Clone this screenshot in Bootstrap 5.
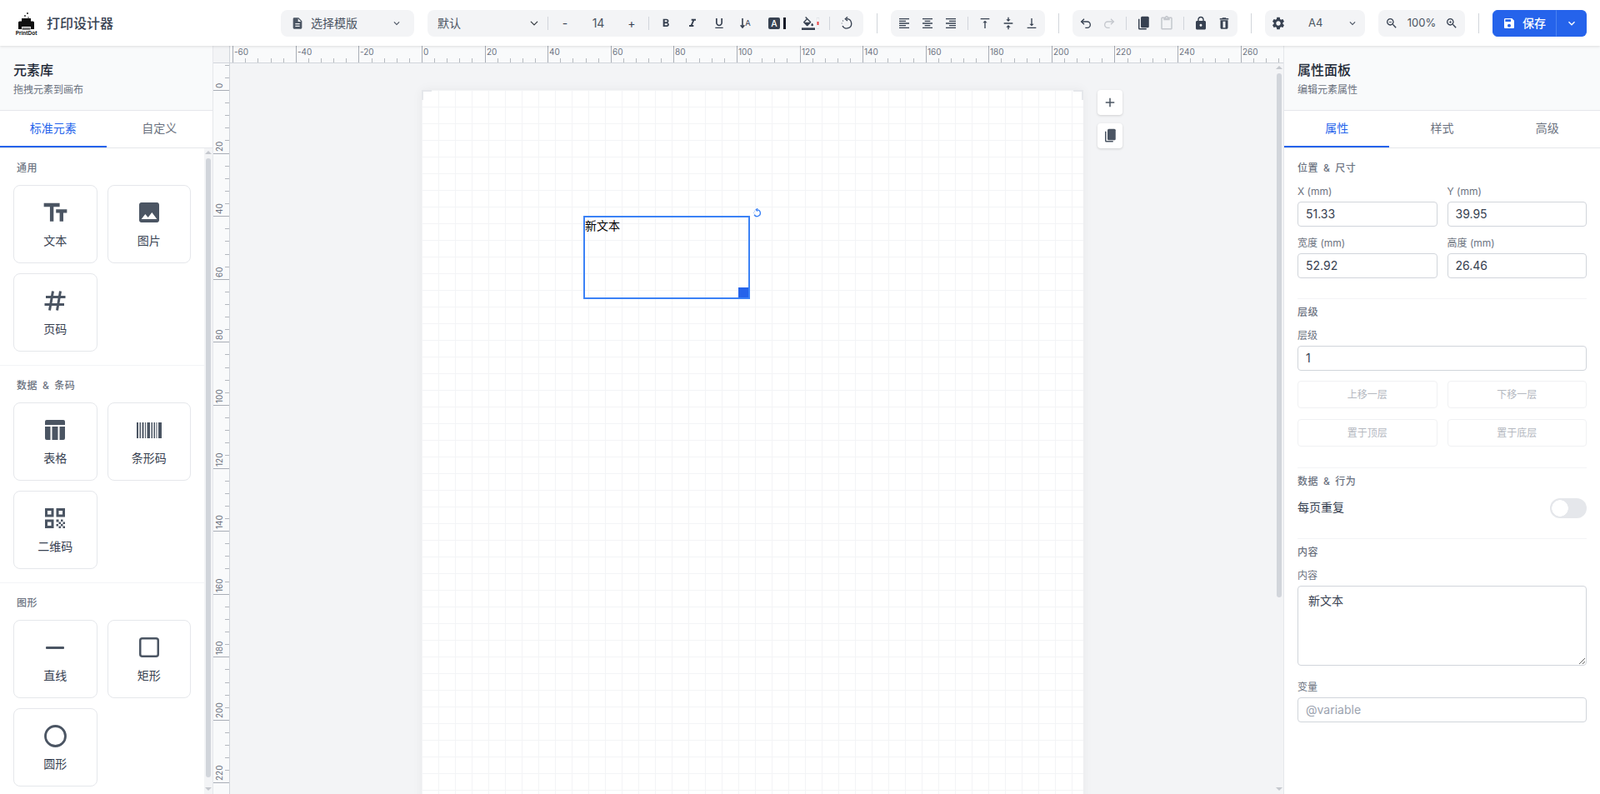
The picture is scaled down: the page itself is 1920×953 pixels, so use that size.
<!DOCTYPE html>
<html lang="zh-CN">
  <head>
    <meta charset="UTF-8" />
    <meta name="viewport" content="width=device-width, initial-scale=1.0" />
    <title>打印设计器</title>
    <link rel="stylesheet" href="https://cdn.jsdelivr.net/npm/bootstrap@5.3.0/dist/css/bootstrap.min.css" />
    <style>
      body {
        font-family: Inter, "Noto Sans CJK SC", sans-serif;
        font-size: 14px;
        color: #374151;
        height: 953px;
        overflow: hidden;
      }
      svg { display: block; flex-shrink: 0; }

      /* header */
      .app-header {
        height: 55px;
        flex-shrink: 0;
        padding: 0 16px;
        background: #fff;
        box-shadow: 0 1px 3px rgba(0, 0, 0, 0.12);
        position: relative;
        z-index: 5;
      }
      .brand-name { font-size: 16px; font-weight: 500; color: #374151; margin-left: 9px; }
      .tool-group {
        height: 32px;
        padding: 0 2px;
        background: #f3f4f6;
        border-radius: 8px;
      }
      .tool-btn {
        width: 28px;
        height: 28px;
        padding: 0;
        border: 0;
        border-radius: 4px;
        color: #374151;
        font-size: 14px;
        display: flex;
        align-items: center;
        justify-content: center;
      }
      .tool-btn.is-off { color: #c4c7cd; }
      .tool-sep { width: 1px; height: 16px; margin: 0 6px; background: #d1d5db; }
      .head-sep { width: 1px; height: 24px; background: #d1d5db; }
      .template-pick { width: 160px; padding: 0 14px 0 12px; color: #4b5563; }
      .template-pick span { margin-left: 8px; font-size: 14px; margin-right: auto; }
      .font-pick {
        width: 138px;
        height: 32px;
        padding: 0 20px 0 12px;
        border: 0;
        background-color: transparent;
        background-position: right 4px center;
        background-size: 12px 10px;
        font-size: 14px;
        color: #4b5563;
      }
      .size-value { width: 52px; text-align: center; color: #4b5563; }
      .wide-btn { width: 38px; }
      .fill-btn { width: 34px; }
      .page-pick { width: 88px; padding: 0 6px 0 22px; font-size: 13px; color: #4b5563; }
      .zoom-value { width: 44px; text-align: center; font-size: 13px; color: #4b5563; }
      .save-btn { background: #2563eb; border-color: #2563eb; height: 32px; font-size: 14px; font-weight: 500; display: flex; align-items: center; }
      .save-main { width: 77px; padding: 0 0 0 11px; gap: 8px; }
      .save-drop { width: 37px; padding: 0; justify-content: center; border-left-color: #4b82f0; }

      /* side panels */
      .side-left { width: 256px; flex-shrink: 0; border-right: 1px solid #e5e7eb; }
      .side-right { width: 380px; flex-shrink: 0; border-left: 1px solid #e5e7eb; }
      .panel-head {
        height: 78px;
        flex-shrink: 0;
        padding: 17px 16px 0;
        background: #f9fafb;
        border-bottom: 1px solid #e5e7eb;
      }
      .panel-title { font-size: 16px; line-height: 24px; font-weight: 500; color: #1f2937; margin-bottom: 3px; }
      .panel-sub { font-size: 12px; line-height: 18px; color: #6b7280; }
      .panel-tabs { height: 45px; flex-shrink: 0; border-bottom: 1px solid #e5e7eb; }
      .panel-tabs .nav-link {
        height: 44px;
        padding: 0;
        line-height: 42px;
        color: #6b7280;
        font-size: 14px;
        border-radius: 0;
        border-bottom: 2px solid transparent;
      }
      .panel-tabs .nav-link.active { color: #2563eb; border-bottom-color: #2563eb; }

      .fake-scroll { width: 10px; flex-shrink: 0; background: #f3f4f6; align-items: center; }
      .fake-scroll .arrow-up,
      .fake-scroll .arrow-down { width: 0; height: 0; border-left: 4px solid transparent; border-right: 4px solid transparent; }
      .fake-scroll .arrow-up { border-bottom: 4px solid #c5c8ce; }
      .fake-scroll .arrow-down { border-top: 4px solid #c5c8ce; margin-top: auto; margin-bottom: 4px; }
      .fake-scroll .bar { width: 6px; background: #d1d5db; border-radius: 3px; }
      .left-scroll .arrow-up { margin-top: 3px; }
      .left-scroll .bar { height: 743px; margin-top: 5px; }
      .canvas-scroll .arrow-up { margin-top: 3px; }
      .canvas-scroll .bar { height: 629px; margin-top: 5px; }

      .lib-section { padding: 16px; border-bottom: 1px solid #f3f4f6; }
      .lib-section .group-title { padding-left: 4px; }
      .group-title { font-size: 12px; line-height: 16px; font-weight: 500; letter-spacing: 0.6px; word-spacing: 2px; color: #6b7280; margin-bottom: 12px; }
      .tile-grid { display: grid; grid-template-columns: 1fr 1fr; gap: 12px; }
      .tile {
        height: 94px;
        border: 1px solid #e5e7eb;
        border-radius: 8px;
        align-items: center;
        padding-top: 16px;
        color: #374151;
        font-size: 14px;
        line-height: 20px;
      }
      .tile-icon { width: 32px; height: 32px; margin-bottom: 8px; color: #4b5563; display: flex; align-items: center; justify-content: center; }

      /* rulers + canvas */
      .ruler-top { height: 21px; flex-shrink: 0; }
      .ruler-corner { width: 20px; background: #f3f4f6; border-right: 1px solid #d1d5db; border-bottom: 1px solid #d1d5db; flex-shrink: 0; }
      .ruler-strip { flex-grow: 1; background: #f9fafb; border-bottom: 1px solid #d1d5db; overflow: hidden; }
      .ruler-side { width: 20px; flex-shrink: 0; background: #f9fafb; border-right: 1px solid #d1d5db; overflow: hidden; }
      .ruler-strip text, .ruler-side text { font-size: 10px; fill: #6b7280; font-family: Inter, sans-serif; }
      .canvas-area { background: #f3f4f6; padding: 32px 0 0 230px; overflow: hidden; min-width: 0; }
      .sheet {
        width: 794px;
        height: 1123px;
        flex-shrink: 0;
        position: relative;
        background-color: #fff;
        background-image: linear-gradient(#f3f4f6 1px, transparent 1px), linear-gradient(90deg, #f3f4f6 1px, transparent 1px);
        background-size: 20px 20px;
        box-shadow: 0 0 12px rgba(0, 0, 0, 0.05);
      }
      .corner-mark { position: absolute; top: 0; width: 12px; height: 12px; border-top: 2px solid #e5e7eb; }
      .corner-mark.at-left { left: 0; border-left: 2px solid #e5e7eb; }
      .corner-mark.at-right { right: 0; border-right: 2px solid #e5e7eb; }
      .text-box {
        position: absolute;
        left: 194px;
        top: 151px;
        width: 200px;
        height: 100px;
        border: 2px solid #3b82f6;
        font-size: 14px;
        line-height: 20px;
        color: #000;
      }
      .resize-dot { position: absolute; right: 0; bottom: 0; width: 12px; height: 12px; background: #2563eb; }
      .spin-dot { position: absolute; left: 201px; top: -11px; color: #3b82f6; }
      .float-tools { margin-left: 17px; gap: 10px; }
      .float-btn {
        width: 30px;
        height: 30px;
        padding: 0;
        border: 0;
        border-radius: 4px;
        background: #fff;
        color: #4b5563;
        box-shadow: 0 1px 3px rgba(0, 0, 0, 0.15);
        display: flex;
        align-items: center;
        justify-content: center;
      }

      /* properties */
      .prop-body { padding: 16px 16px 0; }
      .prop-section { padding-bottom: 24px; margin-bottom: 8px; border-bottom: 1px solid #f3f4f6; }
      .prop-section.is-layers { padding-bottom: 25px; }
      .prop-section:last-child { border-bottom: 0; }
      .prop-grid { display: grid; grid-template-columns: 1fr 1fr; gap: 12px; }
      .prop-label { display: block; font-size: 12px; line-height: 16px; color: #6b7280; margin-bottom: 4px; }
      .prop-input { height: 30px; padding: 0 9px 1px; border-color: #d1d5db; border-radius: 4px; font-size: 14px; color: #374151; }
      .prop-input::placeholder { color: #9ca3af; }
      .prop-area { display: block; height: 96px; padding: 6px 12px; line-height: 21px; border-color: #d1d5db; border-radius: 4px; font-size: 14px; color: #374151; }
      .layer-btn {
        height: 33px;
        padding: 0;
        border: 1px solid #f0f1f3;
        border-radius: 4px;
        color: #b4b8bf;
        font-size: 12px;
      }
      .layer-btn:disabled { opacity: 1; color: #b4b8bf; border-color: #f0f1f3; }
      .repeat-row { height: 24px; color: #374151; }
      .repeat-row span { line-height: 22px; height: 24px; }
      .repeat-switch.form-switch { padding: 0; margin: 0; min-height: 0; height: 24px; }
      .repeat-switch.form-switch .form-check-input {
        width: 44px;
        height: 24px;
        margin: 0;
        border: 0;
        border-radius: 12px;
        background-color: #e5e7eb;
        background-image: radial-gradient(circle at 12px 12px, #fff 9.5px, transparent 10px);
        background-position: 0 0;
      }
    </style>
  </head>
  <body class="d-flex flex-column">
    <header class="app-header d-flex align-items-center">
      <svg width="31" height="31" viewBox="0 0 31 31">
        <circle cx="17" cy="4" r="1" fill="#222" />
        <circle cx="14" cy="7" r="0.9" fill="#222" />
        <circle cx="18" cy="9" r="0.8" fill="#222" />
        <rect x="10" y="10" width="11" height="4" fill="#111" />
        <path d="M6 15a1.500 1.500 0 0 1 1.500-1.500h16a1.500 1.500 0 0 1 1.500 1.500v8h-4v-3h-11v3h-4z" fill="#111" />
        <rect x="10.500" y="21" width="10" height="3" fill="#777" />
        <text x="15.500" y="30" text-anchor="middle" font-family="Liberation Sans" font-size="6.500" font-weight="700" fill="#111">PrintDot</text>
      </svg>
      <span class="brand-name me-auto">打印设计器</span>

      <div class="d-flex align-items-center gap-3">
        <div class="tool-group template-pick d-flex align-items-center">
          <svg width="16" height="16" viewBox="0 0 24 24" fill="#4b5563"><path d="M14 2H6c-1.100 0-1.990.900-1.990 2L4 20c0 1.100.890 2 1.990 2H18c1.100 0 2-.900 2-2V8l-6-6zm2 16H8v-2h8v2zm0-4H8v-2h8v2zm-3-5V3.500L18.500 9H13z" /></svg>
          <span>选择模版</span>
          <svg width="14" height="14" viewBox="0 0 24 24" fill="#4b5563"><path d="M7.410 8.590L12 13.170l4.590-4.580L18 10l-6 6-6-6 1.410-1.410z" /></svg>
        </div>

        <div class="tool-group d-flex align-items-center" style="padding: 0 6px 0 0">
          <select class="form-select font-pick shadow-none"><option>默认</option></select>
          <div class="tool-sep"></div>
          <button class="btn tool-btn">-</button>
          <div class="size-value">14</div>
          <button class="btn tool-btn">+</button>
          <div class="tool-sep"></div>
          <div class="d-flex align-items-center gap-1">
            <button class="btn tool-btn"><svg width="16" height="16" viewBox="0 0 24 24" fill="currentColor"><path d="M15.600 10.790c.970-.670 1.650-1.770 1.650-2.790 0-2.260-1.750-4-4-4H7v14h7.040c2.090 0 3.710-1.700 3.710-3.790 0-1.520-.860-2.820-2.150-3.420zM10 6.500h3c.830 0 1.500.670 1.500 1.500s-.670 1.500-1.500 1.500h-3v-3zm3.500 9H10v-3h3.500c.830 0 1.500.670 1.500 1.500s-.670 1.500-1.500 1.500z" /></svg></button>
            <button class="btn tool-btn"><svg width="16" height="16" viewBox="0 0 24 24" fill="currentColor"><path d="M10 4v3h2.210l-3.420 8H6v3h8v-3h-2.210l3.420-8H18V4z" /></svg></button>
            <button class="btn tool-btn"><svg width="16" height="16" viewBox="0 0 24 24" fill="currentColor"><path d="M12 17c3.310 0 6-2.690 6-6V3h-2.500v8c0 1.930-1.570 3.500-3.500 3.500S8.500 12.930 8.500 11V3H6v8c0 3.310 2.690 6 6 6zm-7 2v2h14v-2H5z" /></svg></button>
            <button class="btn tool-btn"><svg width="16" height="16" viewBox="0 0 24 24"><path d="M6 3v16M2.500 15.500 6 19.500l3.500-4" fill="none" stroke="currentColor" stroke-width="2.400" /><text x="11" y="17" font-family="Inter" font-size="14" fill="currentColor">A</text></svg></button>
            <button class="btn tool-btn wide-btn">
              <span class="d-flex align-items-center" style="gap: 4px">
                <svg width="14" height="14" viewBox="0 0 14 14"><rect width="14" height="14" rx="2" fill="#374151" /><text x="7" y="11" text-anchor="middle" font-family="Inter" font-size="10.500" font-weight="500" fill="#fff">A</text></svg>
                <svg width="3" height="14" viewBox="0 0 3 14"><rect width="3" height="14" fill="#111827" /></svg>
              </span>
            </button>
            <button class="btn tool-btn fill-btn">
              <span class="d-flex align-items-center" style="gap: 2px">
                <svg width="16" height="16" viewBox="0 0 24 24" fill="currentColor"><path d="M16.560 8.940L7.620 0 6.210 1.410l2.380 2.380-5.150 5.150c-.590.590-.590 1.540 0 2.120l5.500 5.500c.290.290.680.440 1.060.440s.770-.150 1.060-.440l5.500-5.500c.590-.580.590-1.530 0-2.120zM5.210 10L10 5.210 14.790 10H5.210zM19 11.500s-2 2.170-2 3.500c0 1.100.900 2 2 2s2-.900 2-2c0-1.330-2-3.500-2-3.500z" /><path d="M0 20h24v4H0z" /></svg>
                <svg width="3" height="14" viewBox="0 0 3 14"><rect x="0.250" y="0.250" width="2.500" height="13.500" fill="#fff" stroke="#d1d5db" stroke-width="0.500" /><rect x="0.500" y="5" width="2" height="4" fill="#ef4444" /></svg>
              </span>
            </button>
          </div>
          <div class="tool-sep"></div>
          <button class="btn tool-btn"><svg width="16" height="16" viewBox="0 0 24 24" fill="none" stroke="currentColor" stroke-width="2"><path d="M12 4a8.500 8.500 0 1 1-7.500 12.500" /><path d="M3.500 12.500v-1M5 8l.6-.9" /><path d="M13.500 0.500 9.500 4l4 3.500" /></svg></button>
        </div>

        <div class="head-sep"></div>

        <div class="tool-group d-flex align-items-center">
          <button class="btn tool-btn"><svg width="16" height="16" viewBox="0 0 24 24" fill="currentColor"><path d="M15 15H3v2h12v-2zm0-8H3v2h12V7zM3 13h18v-2H3v2zm0 8h18v-2H3v2zM3 3v2h18V3H3z" /></svg></button>
          <button class="btn tool-btn"><svg width="16" height="16" viewBox="0 0 24 24" fill="currentColor"><path d="M7 15v2h10v-2H7zm-4 6h18v-2H3v2zm0-8h18v-2H3v2zm4-6v2h10V7H7zM3 3v2h18V3H3z" /></svg></button>
          <button class="btn tool-btn"><svg width="16" height="16" viewBox="0 0 24 24" fill="currentColor"><path d="M3 21h18v-2H3v2zm6-4h12v-2H9v2zm-6-4h18v-2H3v2zm6-4h12V7H9v2zM3 3v2h18V3H3z" /></svg></button>
          <div class="tool-sep"></div>
          <button class="btn tool-btn"><svg width="16" height="16" viewBox="0 0 24 24" fill="currentColor"><path d="M8 11h3v10h2V11h3l-4-4-4 4zM4 3v2h16V3H4z" /></svg></button>
          <button class="btn tool-btn"><svg width="16" height="16" viewBox="0 0 24 24" fill="currentColor"><path d="M8 19h3v4h2v-4h3l-4-4-4 4zm8-14h-3V1h-2v4H8l4 4 4-4zM4 11v2h16v-2H4z" /></svg></button>
          <button class="btn tool-btn"><svg width="16" height="16" viewBox="0 0 24 24" fill="currentColor"><path d="M16 13h-3V3h-2v10H8l4 4 4-4zM4 19v2h16v-2H4z" /></svg></button>
        </div>

        <div class="head-sep"></div>

        <div class="tool-group d-flex align-items-center">
          <button class="btn tool-btn"><svg width="16" height="16" viewBox="0 0 24 24" fill="none" stroke="currentColor" stroke-width="2"><path d="M9 14 4 9l5-5" /><path d="M4 9h10.500a5.500 5.500 0 0 1 0 11H11" /></svg></button>
          <button class="btn tool-btn is-off"><svg width="16" height="16" viewBox="0 0 24 24" fill="none" stroke="currentColor" stroke-width="2"><path d="m15 14 5-5-5-5" /><path d="M20 9H9.500a5.500 5.500 0 0 0 0 11H13" /></svg></button>
          <div class="tool-sep"></div>
          <button class="btn tool-btn"><svg width="18" height="18" viewBox="0 0 24 24" fill="currentColor"><path d="M10 1h9a2 2 0 0 1 2 2v14a2 2 0 0 1-2 2h-9a2 2 0 0 1-2-2V3a2 2 0 0 1 2-2z" /><path d="M4 5h2v15h11v2H6a2 2 0 0 1-2-2z" /></svg></button>
          <button class="btn tool-btn is-off"><svg width="18" height="18" viewBox="0 0 24 24" fill="currentColor"><path d="M19 2h-4.180C14.400.840 13.300 0 12 0c-1.300 0-2.400.840-2.820 2H5c-1.100 0-2 .900-2 2v16c0 1.100.900 2 2 2h14c1.100 0 2-.900 2-2V4c0-1.100-.900-2-2-2zm-7 0c.550 0 1 .450 1 1s-.450 1-1 1-1-.450-1-1 .450-1 1-1zm7 18H5V4h2v3h10V4h2v16z" /></svg></button>
          <div class="tool-sep"></div>
          <button class="btn tool-btn"><svg width="18" height="18" viewBox="0 0 24 24" fill="currentColor"><path d="M18 8h-1V6c0-2.760-2.240-5-5-5S7 3.240 7 6v2H6c-1.100 0-2 .900-2 2v10c0 1.100.900 2 2 2h12c1.100 0 2-.900 2-2V10c0-1.100-.900-2-2-2zm-6 9c-1.100 0-2-.900-2-2s.900-2 2-2 2 .900 2 2-.900 2-2 2zm3.100-9H8.900V6c0-1.710 1.390-3.100 3.100-3.100 1.710 0 3.100 1.390 3.100 3.100v2z" /></svg></button>
          <button class="btn tool-btn"><svg width="18" height="18" viewBox="0 0 24 24" fill="currentColor" fill-rule="evenodd"><path d="M6 19c0 1.100.900 2 2 2h8c1.100 0 2-.900 2-2V7H6v12zM10 9v10h4V9zM19 4h-3.500l-1-1h-5l-1 1H5v2h14V4z" /></svg></button>
        </div>

        <div class="head-sep"></div>

        <div class="tool-group d-flex align-items-center">
          <button class="btn tool-btn"><svg width="18" height="18" viewBox="0 0 24 24" fill="currentColor"><path d="M19.140 12.940c.040-.300.060-.610.060-.940 0-.320-.020-.640-.070-.940l2.030-1.580c.180-.140.230-.410.120-.610l-1.920-3.320c-.120-.220-.370-.290-.590-.220l-2.390.960c-.500-.380-1.030-.700-1.620-.940l-.360-2.540c-.040-.240-.240-.410-.480-.410h-3.840c-.240 0-.430.170-.470.410l-.360 2.540c-.590.240-1.130.570-1.620.940l-2.390-.960c-.220-.080-.470 0-.590.220L2.740 8.870c-.120.210-.080.470.120.610l2.030 1.580c-.050.300-.090.630-.090.940s.020.640.070.940l-2.030 1.580c-.180.140-.230.410-.12.610l1.920 3.320c.120.220.370.290.590.220l2.390-.960c.500.380 1.030.700 1.620.940l.360 2.540c.050.240.240.410.480.410h3.840c.240 0 .440-.170.470-.410l.360-2.540c.590-.240 1.130-.560 1.620-.940l2.390.960c.220.080.470 0 .590-.220l1.920-3.320c.120-.220.070-.470-.120-.610l-2.010-1.580zM12 15.600c-1.980 0-3.600-1.620-3.600-3.600s1.620-3.600 3.600-3.600 3.600 1.620 3.600 3.600-1.620 3.600-3.600 3.600z" /></svg></button>
          <div class="page-pick d-flex align-items-center justify-content-between">
            <span>A4</span>
            <svg width="14" height="14" viewBox="0 0 24 24" fill="#4b5563"><path d="M7.410 8.590L12 13.170l4.590-4.580L18 10l-6 6-6-6 1.410-1.410z" /></svg>
          </div>
        </div>

        <div class="tool-group d-flex align-items-center">
          <button class="btn tool-btn"><svg width="16" height="16" viewBox="0 0 24 24" fill="currentColor"><path d="M15.500 14h-.790l-.280-.270C15.410 12.590 16 11.110 16 9.500 16 5.910 13.090 3 9.500 3S3 5.910 3 9.500 5.910 16 9.500 16c1.610 0 3.090-.590 4.230-1.570l.270.280v.790l5 4.990L20.490 19l-4.990-5zm-6 0C7.010 14 5 11.990 5 9.500S7.010 5 9.500 5 14 7.010 14 9.500 11.990 14 9.500 14z" /><path d="M7 9h5v1.200H7z" /></svg></button>
          <div class="zoom-value">100%</div>
          <button class="btn tool-btn"><svg width="16" height="16" viewBox="0 0 24 24" fill="currentColor"><path d="M15.500 14h-.790l-.280-.270C15.410 12.590 16 11.110 16 9.500 16 5.910 13.090 3 9.500 3S3 5.910 3 9.500 5.910 16 9.500 16c1.610 0 3.090-.590 4.230-1.570l.270.280v.790l5 4.990L20.490 19l-4.990-5zm-6 0C7.010 14 5 11.990 5 9.500S7.010 5 9.500 5 14 7.010 14 9.500 11.990 14 9.500 14z" /><path d="M12 10h-2v2H9v-2H7V9h2V7h1v2h2v1z" /></svg></button>
        </div>

        <div class="head-sep"></div>

        <div class="btn-group">
          <button class="btn btn-primary save-btn save-main">
            <svg width="16" height="16" viewBox="0 0 24 24" fill="#fff"><path d="M17 3H5c-1.110 0-2 .900-2 2v14c0 1.100.890 2 2 2h14c1.100 0 2-.900 2-2V7l-4-4zm-5 16c-1.660 0-3-1.340-3-3s1.340-3 3-3 3 1.340 3 3-1.340 3-3 3zm3-10H5V5h10v4z" /></svg>
            保存
          </button>
          <button class="btn btn-primary save-btn save-drop">
            <svg width="16" height="16" viewBox="0 0 24 24" fill="#fff"><path d="M7.410 8.590L12 13.170l4.590-4.580L18 10l-6 6-6-6 1.410-1.410z" /></svg>
          </button>
        </div>
      </div>
    </header>

    <main class="d-flex flex-grow-1" style="min-height: 0">
      <aside class="side-left d-flex flex-column">
        <div class="panel-head">
          <div class="panel-title">元素库</div>
          <div class="panel-sub">拖拽元素到画布</div>
        </div>
        <ul class="nav nav-justified panel-tabs">
          <li class="nav-item"><a class="nav-link active" href="#">标准元素</a></li>
          <li class="nav-item"><a class="nav-link" href="#">自定义</a></li>
        </ul>
        <div class="d-flex flex-grow-1" style="min-height: 0">
          <div class="flex-grow-1 overflow-hidden">
            <section class="lib-section">
              <div class="group-title">通用</div>
              <div class="tile-grid">
                <div class="card tile">
                  <div class="tile-icon"><svg width="35" height="35" viewBox="0 0 24 24" fill="currentColor"><path d="M2.500 4v3h5v12h3V7h5V4h-13zm19 5h-9v3h3v7h3v-7h3V9z" /></svg></div>
                  文本
                </div>
                <div class="card tile">
                  <div class="tile-icon"><svg width="32" height="32" viewBox="0 0 24 24" fill="currentColor"><path d="M21 19V5c0-1.100-.900-2-2-2H5c-1.100 0-2 .900-2 2v14c0 1.100.900 2 2 2h14c1.100 0 2-.900 2-2zM8.500 13.500l2.500 3.010L14.500 12l4.500 6H5l3.500-4.500z" /></svg></div>
                  图片
                </div>
                <div class="card tile">
                  <div class="tile-icon"><svg width="32" height="32" viewBox="0 0 32 32" fill="none" stroke="currentColor" stroke-width="3"><path d="M13.500 4.500 9.500 27.500M22.500 4.500l-4 23M5 11.500h23.500M3.500 20.500H27" /></svg></div>
                  页码
                </div>
              </div>
            </section>
            <section class="lib-section">
              <div class="group-title">数据 &amp; 条码</div>
              <div class="tile-grid">
                <div class="card tile">
                  <div class="tile-icon"><svg width="24" height="24" viewBox="0 0 24 24" fill="currentColor"><path d="M2 0h20a2 2 0 0 1 2 2v4H0V2a2 2 0 0 1 2-2z" /><path d="M0 8h6.500v16H2a2 2 0 0 1-2-2zM8.500 8h7v16h-7zM17.500 8H24v14a2 2 0 0 1-2 2h-4.500z" /></svg></div>
                  表格
                </div>
                <div class="card tile">
                  <div class="tile-icon"><svg width="30" height="19" viewBox="0 0 30 19" fill="currentColor"><path d="M0 0h2v19H0zM3.500 0H5v19H3.500zM6.500 0h2v19h-2zM10 0h1v19h-1zM12.500 0H16v19h-3.500zM17.500 0H19v19h-1.500zM20.500 0H22v19h-1.500zM23.500 0H24.500v19h-1zM26 0h4v19h-4z" /></svg></div>
                  条形码
                </div>
                <div class="card tile">
                  <div class="tile-icon"><svg width="24" height="24" viewBox="0 0 24 24" fill="currentColor" fill-rule="evenodd"><path d="M0 0h10.500v10.500H0zM3 3v4.500h4.500V3zM13.500 0H24v10.500H13.500zM16.500 3v4.500H21V3zM0 13.500h10.500V24H0zM3 16.500V21h4.500v-4.500z" /><path d="M13.500 13.500h3v3h-3zM19 13.500h2.500V16H19zM16.500 16.500H19V19h-2.500zM21.500 16.500H24V19h-2.500zM13.500 19H16v2.500h-2.500zM19 19h2.500v2.500H19zM16.500 21.500H19V24h-2.500zM21.500 21.500H24V24h-2.500z" /></svg></div>
                  二维码
                </div>
              </div>
            </section>
            <section class="lib-section">
              <div class="group-title">图形</div>
              <div class="tile-grid">
                <div class="card tile">
                  <div class="tile-icon"><svg width="22" height="3" viewBox="0 0 22 3"><rect width="22" height="3" rx="1" fill="currentColor" /></svg></div>
                  直线
                </div>
                <div class="card tile">
                  <div class="tile-icon"><svg width="24" height="24" viewBox="0 0 24 24"><rect x="1.250" y="1.250" width="21.500" height="21.500" rx="2.500" fill="none" stroke="currentColor" stroke-width="2.500" /></svg></div>
                  矩形
                </div>
                <div class="card tile">
                  <div class="tile-icon"><svg width="27" height="27" viewBox="0 0 27 27"><circle cx="13.500" cy="13.500" r="12" fill="none" stroke="currentColor" stroke-width="2.800" /></svg></div>
                  圆形
                </div>
              </div>
            </section>
          </div>
          <div class="fake-scroll left-scroll d-flex flex-column">
            <div class="arrow-up"></div>
            <div class="bar"></div>
            <div class="arrow-down"></div>
          </div>
        </div>
      </aside>

      <section class="d-flex flex-column flex-grow-1" style="min-width: 0">
        <div class="ruler-top d-flex">
          <div class="ruler-corner"></div>
          <div class="ruler-strip"><svg id="rulerTop" width="1264" height="20" shape-rendering="crispEdges"></svg></div>
        </div>
        <div class="d-flex flex-grow-1" style="min-height: 0">
          <div class="ruler-side"><svg id="rulerSide" width="19" height="877" shape-rendering="crispEdges"></svg></div>
          <div class="canvas-area d-flex align-items-start flex-grow-1">
            <div class="sheet">
              <div class="corner-mark at-left"></div>
              <div class="corner-mark at-right"></div>
              <div class="text-box">
                新文本
                <div class="resize-dot"></div>
                <svg class="spin-dot" width="11" height="11" viewBox="0 0 24 24" fill="none" stroke="currentColor" stroke-width="3"><path d="M12 4a8.500 8.500 0 1 1-7.500 12.500" /><path d="M3.500 12.500v-1M5 8l.6-.9" /><path d="M13.500 0.500 9.500 4l4 3.500" /></svg>
              </div>
            </div>
            <div class="float-tools d-flex flex-column">
              <button class="float-btn"><svg width="18" height="18" viewBox="0 0 24 24" fill="currentColor"><path d="M19 13h-6v6h-2v-6H5v-2h6V5h2v6h6v2z" /></svg></button>
              <button class="float-btn"><svg width="18" height="18" viewBox="0 0 24 24" fill="currentColor"><path d="M10 1h9a2 2 0 0 1 2 2v14a2 2 0 0 1-2 2h-9a2 2 0 0 1-2-2V3a2 2 0 0 1 2-2z" /><path d="M4 5h2v15h11v2H6a2 2 0 0 1-2-2z" /></svg></button>
            </div>
          </div>
          <div class="fake-scroll canvas-scroll d-flex flex-column">
            <div class="arrow-up"></div>
            <div class="bar"></div>
            <div class="arrow-down"></div>
          </div>
        </div>
      </section>

      <aside class="side-right d-flex flex-column">
        <div class="panel-head">
          <div class="panel-title">属性面板</div>
          <div class="panel-sub">编辑元素属性</div>
        </div>
        <ul class="nav nav-justified panel-tabs">
          <li class="nav-item"><a class="nav-link active" href="#">属性</a></li>
          <li class="nav-item"><a class="nav-link" href="#">样式</a></li>
          <li class="nav-item"><a class="nav-link" href="#">高级</a></li>
        </ul>
        <div class="prop-body flex-grow-1 overflow-hidden">
          <section class="prop-section">
            <div class="group-title">位置 &amp; 尺寸</div>
            <div class="prop-grid">
              <div><label class="prop-label">X (mm)</label><input class="form-control prop-input shadow-none" value="51.33" /></div>
              <div><label class="prop-label">Y (mm)</label><input class="form-control prop-input shadow-none" value="39.95" /></div>
              <div><label class="prop-label">宽度 (mm)</label><input class="form-control prop-input shadow-none" value="52.92" /></div>
              <div><label class="prop-label">高度 (mm)</label><input class="form-control prop-input shadow-none" value="26.46" /></div>
            </div>
          </section>
          <section class="prop-section is-layers">
            <div class="group-title">层级</div>
            <label class="prop-label">层级</label>
            <input class="form-control prop-input shadow-none mb-3" style="margin-bottom: 12px !important" value="1" />
            <div class="prop-grid" style="row-gap: 13px">
              <button class="btn layer-btn" disabled>上移一层</button>
              <button class="btn layer-btn" disabled>下移一层</button>
              <button class="btn layer-btn" disabled>置于顶层</button>
              <button class="btn layer-btn" disabled>置于底层</button>
            </div>
          </section>
          <section class="prop-section">
            <div class="group-title">数据 &amp; 行为</div>
            <div class="repeat-row d-flex align-items-center justify-content-between">
              <span>每页重复</span>
              <div class="form-check form-switch repeat-switch"><input class="form-check-input shadow-none" type="checkbox" role="switch" /></div>
            </div>
          </section>
          <section class="prop-section">
            <div class="group-title">内容</div>
            <label class="prop-label">内容</label>
            <textarea class="form-control prop-area shadow-none" style="margin-bottom: 18px">新文本</textarea>
            <label class="prop-label">变量</label>
            <input class="form-control prop-input shadow-none" placeholder="@variable" />
          </section>
        </div>
      </aside>
    </main>

    <script>
      // Rulers: 96 dpi, so one millimetre is 3.7795 px; a tick every 4 mm, a number every 20 mm
      const MM = 3.7795;

      function buildRuler(svg, startMm, endMm, zeroPx, horizontal) {
        let out = "";
        for (let mm = startMm; mm <= endMm; mm += 4) {
          const p = Math.round(zeroPx + mm * MM);
          const major = mm % 20 === 0;
          const color = major ? "#a8adb6" : "#b4b8bf";
          const len = major ? 20 : 5;
          if (horizontal) {
            out += `<line x1="${p}" x2="${p}" y1="${20 - len}" y2="20" stroke="${color}" />`;
            if (major) out += `<text x="${p + 2}" y="11" shape-rendering="auto">${mm}</text>`;
          } else {
            out += `<line y1="${p}" y2="${p}" x1="${19 - len}" x2="19" stroke="${color}" />`;
            if (major) out += `<text transform="translate(11 ${p - 2}) rotate(-90)" shape-rendering="auto">${mm}</text>`;
          }
        }
        svg.innerHTML = out;
      }

      buildRuler(document.getElementById("rulerTop"), -60, 272, 230, true);
      buildRuler(document.getElementById("rulerSide"), -8, 228, 32, false);
    </script>
    <script src="https://cdn.jsdelivr.net/npm/bootstrap@5.3.0/dist/js/bootstrap.bundle.min.js"></script>
  </body>
</html>
